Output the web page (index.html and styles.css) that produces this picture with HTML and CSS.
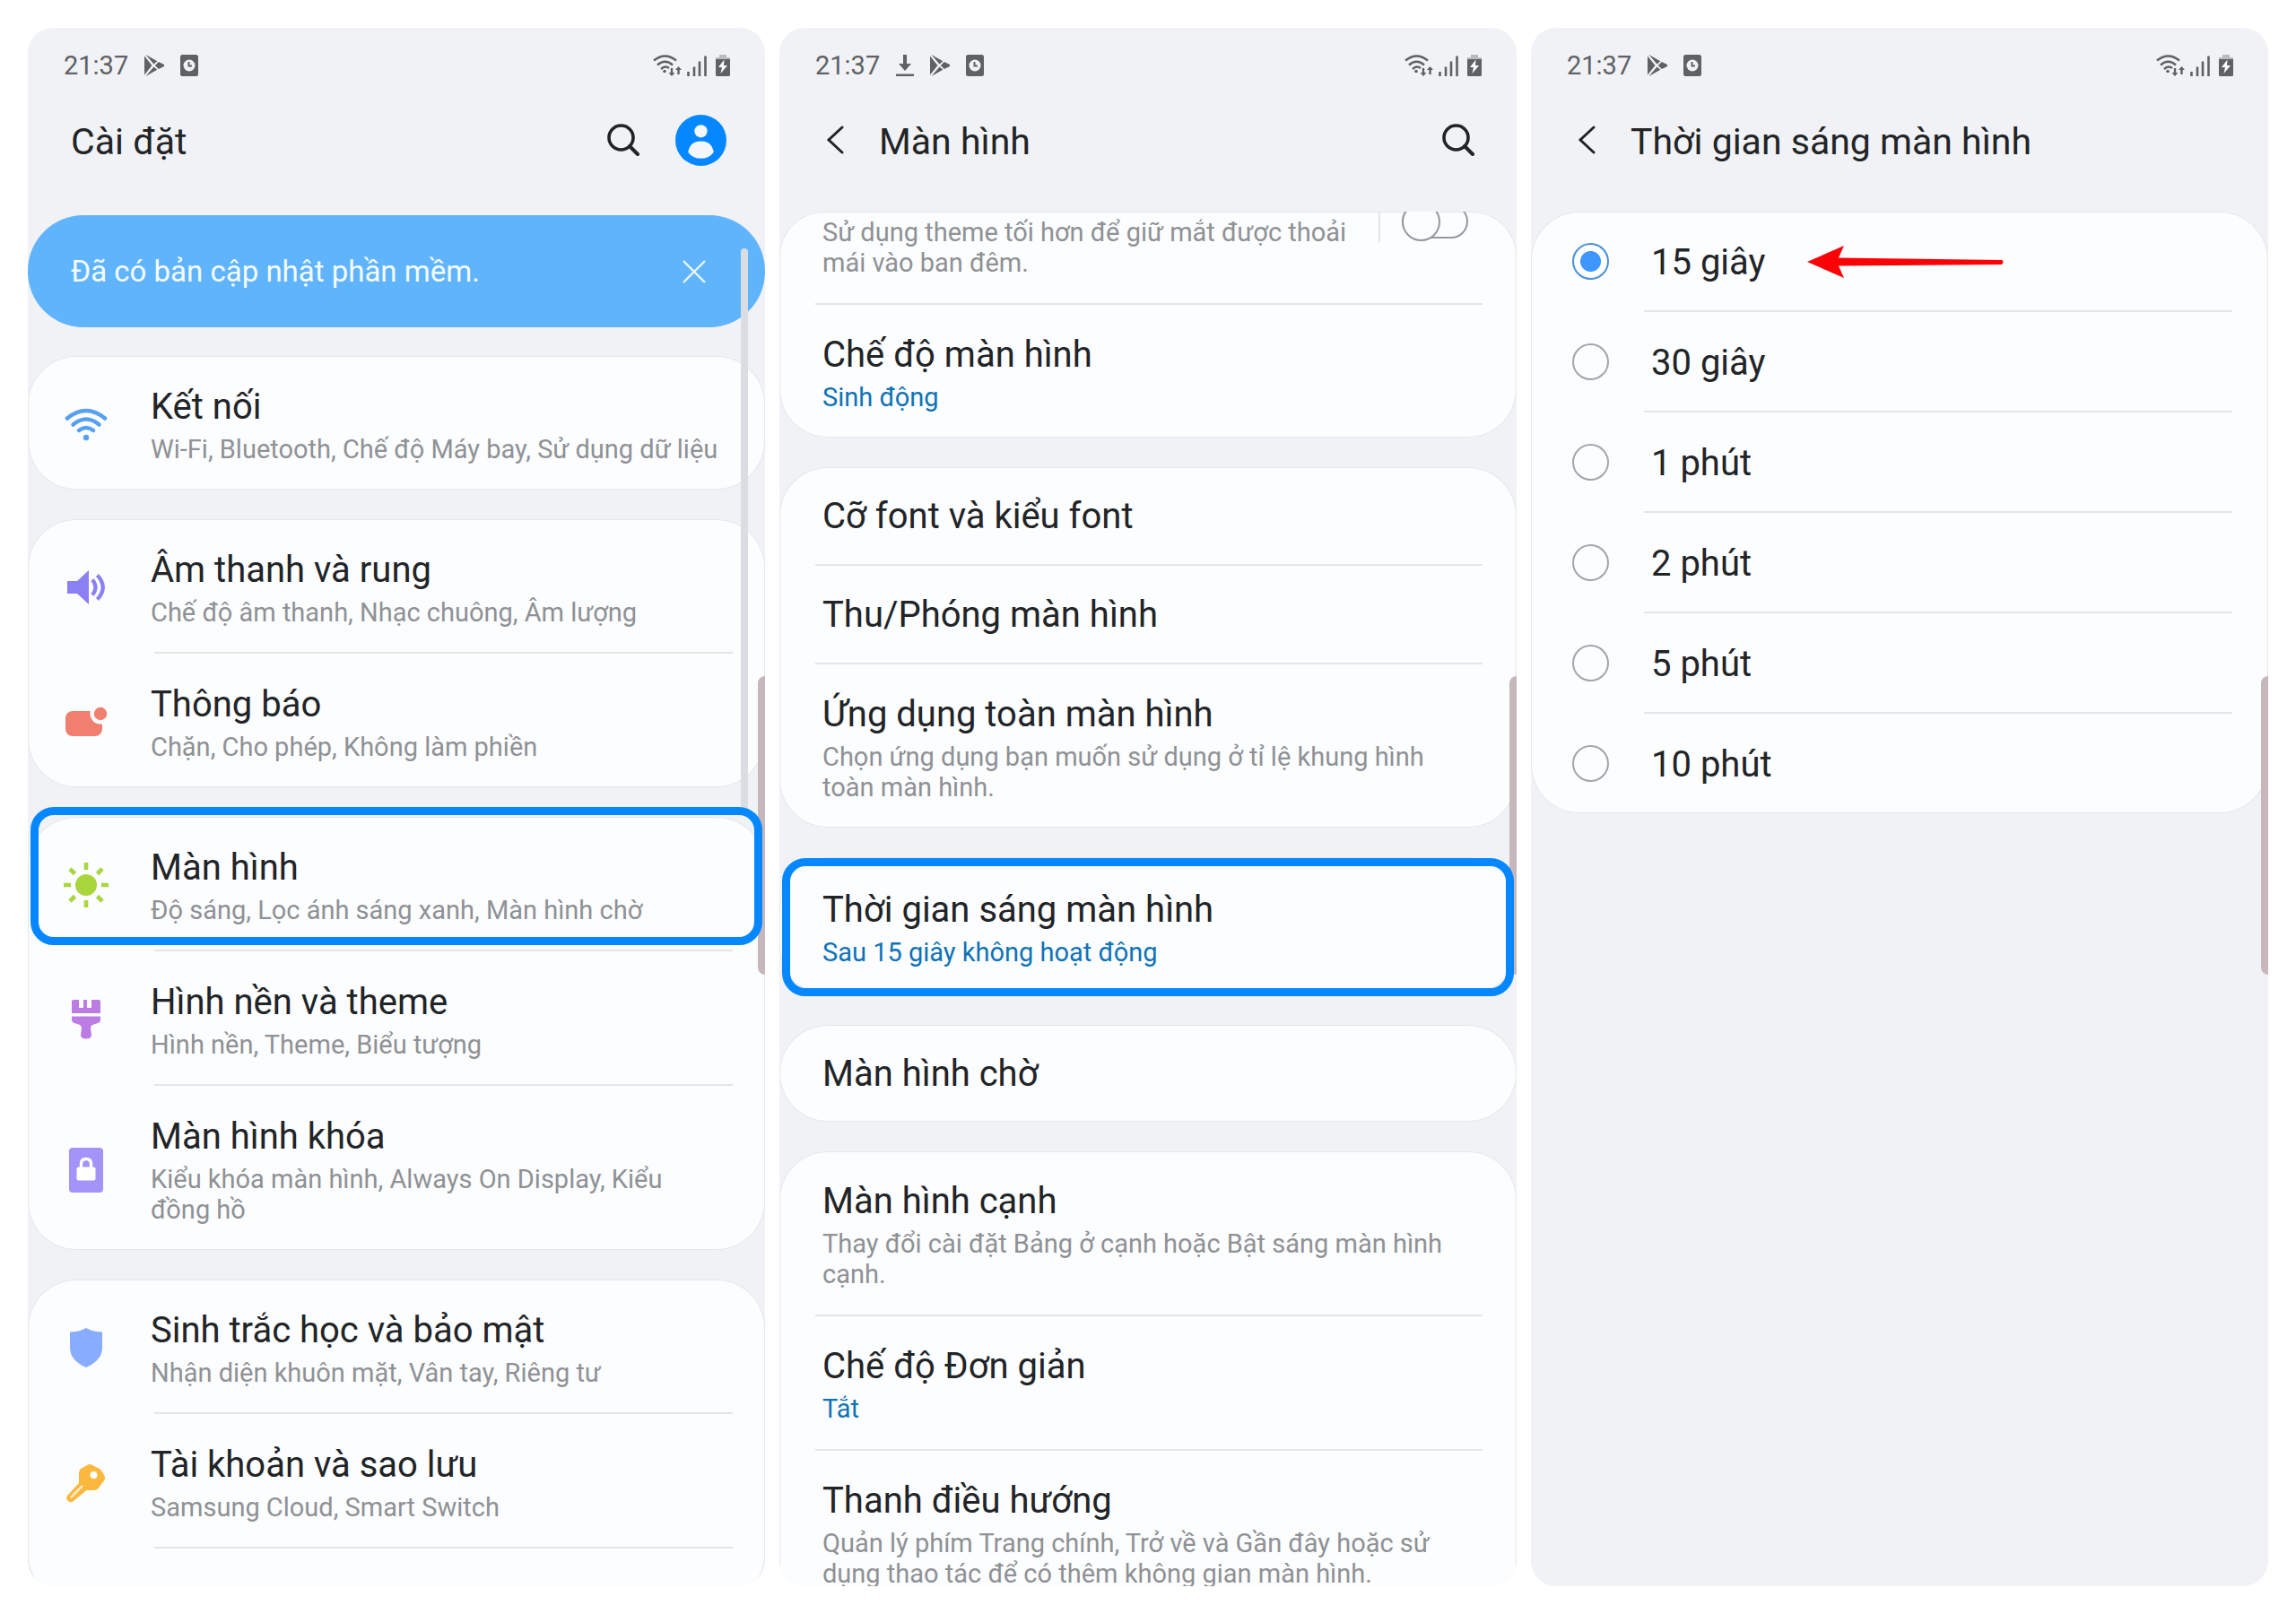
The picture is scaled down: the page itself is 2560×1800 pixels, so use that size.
FILE: index.html
```
<!DOCTYPE html>
<html lang="vi">
    <head>
        <meta charset="utf-8">
        <title>Cài đặt</title>
        <link rel="stylesheet" href="styles.css">
    </head>
    <body>
        <svg class="sprite" aria-hidden="true">
            <symbol id="i-play" viewBox="0 0 22 24">
                <path d="M0 1.500v21L8.500 12zM1.500 0l9 10.500 3.800-3.300zM1.500 24l9-10.500 3.800 3.300zM15.800 8l-4 4 4 4 6.200-3v-2z" fill="currentColor"/>
            </symbol>
            <symbol id="i-doc" viewBox="0 0 20 24">
                <rect width="20" height="24" rx="2.500" fill="currentColor"/>
                <circle cx="10" cy="12" r="6.500" fill="#f0f2f4"/>
                <path d="M9.500 8v4.500h3.500" fill="none" stroke="currentColor" stroke-width="2"/>
            </symbol>
            <symbol id="i-down" viewBox="0 0 20 24">
                <path d="M8 0h4v10h5L10 18 3 10h5zM0 21.500h20V24H0z" fill="currentColor"/>
            </symbol>
            <symbol id="i-netwifi" viewBox="0 0 32 24">
                <g fill="none" stroke="currentColor" stroke-width="2.500">
                    <path d="M1 6.500Q13.500-3.500 26 6.500"/>
                    <path d="M5 11.500Q13.500 4 22 11.500"/>
                    <path d="M9 16Q13.500 11.500 18 15"/>
                </g>
                <circle cx="13" cy="18.500" r="1.800" fill="currentColor"/>
                <path d="M19.800 15h2.400v5h2.300L21 24l-3.500-4h2.300zM27.300 22v-5H25l3.500-4 3.500 4h-2.300v5z" fill="currentColor"/>
            </symbol>
            <symbol id="i-signal" viewBox="0 0 22 24">
                <path d="M1.500 19v5M8 13.500V24M14 7.500V24M20.500 1.500V24" stroke="currentColor" stroke-width="2.600"/>
            </symbol>
            <symbol id="i-battery" viewBox="0 0 16 24">
                <path d="M4 0h8v3h4v4H0V3h4z" fill="#b9bbbe"/>
                <path d="M0 5h16v17.500q0 1.500-1.500 1.500h-13Q0 24 0 22.500z" fill="currentColor"/>
                <path d="M9.500 5.500L3 14h4l-1.500 7L13 12H9z" fill="#fff"/>
            </symbol>
            <symbol id="i-search" viewBox="0 0 36 36">
                <circle cx="15.500" cy="15.500" r="13.500" fill="none" stroke="currentColor" stroke-width="3.600"/>
                <path d="M25 25l9 9" stroke="currentColor" stroke-width="4" stroke-linecap="round"/>
            </symbol>
            <symbol id="i-back" viewBox="0 0 20 32">
                <path d="M18 2L3 16l15 14" fill="none" stroke="currentColor" stroke-width="3" stroke-linecap="round"/>
            </symbol>
        </svg>

        <main class="screens">
            <section class="phone">
                <div class="statusbar">
                    <span class="time">21:37</span>
                    <svg class="st play"><use href="#i-play"/></svg>
                    <svg class="st doc"><use href="#i-doc"/></svg>
                    <svg class="st netwifi"><use href="#i-netwifi"/></svg>
                    <svg class="st signal"><use href="#i-signal"/></svg>
                    <svg class="st battery"><use href="#i-battery"/></svg>
                </div>
                <header class="appbar">
                    <h1>Cài đặt</h1>
                    <button class="search" aria-label="Tìm kiếm"><svg><use href="#i-search"/></svg></button>
                    <button class="avatar" aria-label="Tài khoản">
                        <svg viewBox="0 0 56 56">
                            <circle cx="28" cy="28" r="28" fill="#0588ff"/>
                            <circle cx="28" cy="18" r="7" fill="#f4f8fc"/>
                            <path d="M14 41q2-12 14-12t14 12q-5 7-14 7t-14-7z" fill="#f4f8fc"/>
                        </svg>
                    </button>
                </header>
                <div class="content home">
                    <div class="banner">
                        <p>Đã có bản cập nhật phần mềm.</p>
                        <button class="close" aria-label="Đóng">
                            <svg viewBox="0 0 26 26"><path d="M1 1l24 24M25 1L1 25" stroke="#e9f6ff" stroke-width="2.400"/></svg>
                        </button>
                    </div>
                    <div class="card">
                        <a class="row" href="#">
                            <svg class="icon" viewBox="0 0 52 52">
                                <g fill="none" stroke="#579ff0" stroke-width="4.500" stroke-linecap="round">
                                    <path d="M5 18.500Q26 1.500 47 18.500"/>
                                    <path d="M11.500 25.500Q26 13.500 40.500 25.500"/>
                                    <path d="M18 32Q26 26 34 32"/>
                                </g>
                                <circle cx="26" cy="40" r="3.200" fill="#579ff0"/>
                            </svg>
                            <div class="text">
                                <h2>Kết nối</h2>
                                <p>Wi-Fi, Bluetooth, Chế độ Máy bay, Sử dụng dữ liệu</p>
                            </div>
                        </a>
                    </div>
                    <div class="card">
                        <a class="row" href="#">
                            <svg class="icon" viewBox="0 0 52 52">
                                <path d="M5 18h11L29 6v38L16 32H5z" fill="#8b80f3"/>
                                <path d="M33 16.500q7 8.500 0 17M38.500 11.500q12.500 13.500 0 27" fill="none" stroke="#8b80f3" stroke-width="4.200"/>
                            </svg>
                            <div class="text">
                                <h2>Âm thanh và rung</h2>
                                <p>Chế độ âm thanh, Nhạc chuông, Âm lượng</p>
                            </div>
                        </a>
                        <a class="row" href="#">
                            <svg class="icon" viewBox="0 0 52 52">
                                <rect x="3" y="13" width="41" height="28" rx="8" fill="#f07f70"/>
                                <circle cx="42" cy="16" r="11.500" fill="#fbfdff"/>
                                <circle cx="42" cy="16" r="7.200" fill="#f07f70"/>
                            </svg>
                            <div class="text">
                                <h2>Thông báo</h2>
                                <p>Chặn, Cho phép, Không làm phiền</p>
                            </div>
                        </a>
                    </div>
                    <div class="card">
                        <a class="row" href="#">
                            <svg class="icon" viewBox="0 0 52 52">
                                <circle cx="26" cy="25" r="12" fill="#a8d63c"/>
                                <path d="M26 0v8M26 42v8M1 25h8M43 25h8M8 7l5.500 5.500M38.500 37.500L44 43M44 7l-5.500 5.500M13.500 37.500L8 43" stroke="#a8d63c" stroke-width="4.600"/>
                            </svg>
                            <div class="text">
                                <h2>Màn hình</h2>
                                <p>Độ sáng, Lọc ánh sáng xanh, Màn hình chờ</p>
                            </div>
                            <span class="highlight first"></span>
                        </a>
                        <a class="row" href="#">
                            <svg class="icon" viewBox="0 0 52 52">
                                <path d="M12 3h6v9h5V3h4v9h5V3h8q2 0 2 2v13H10V5q0-2 2-2z" fill="#bc7ce4"/>
                                <path d="M10 21.500h32V25q0 3-3 4l-6 2q-2 1-2 4l1 7q0 4.500-6 4.500T20 42l1-7q0-3-2-4l-6-2q-3-1-3-4z" fill="#bc7ce4"/>
                            </svg>
                            <div class="text">
                                <h2>Hình nền và theme</h2>
                                <p>Hình nền, Theme, Biểu tượng</p>
                            </div>
                        </a>
                        <a class="row" href="#">
                            <svg class="icon" viewBox="0 0 52 52">
                                <rect x="7" y="1" width="38" height="50" rx="4" fill="#a493f8"/>
                                <rect x="15.500" y="22.500" width="21" height="15" rx="2" fill="#fff"/>
                                <path d="M20.500 23v-4q0-5.500 5.500-5.500t5.500 5.500v4" fill="none" stroke="#fff" stroke-width="3.400"/>
                            </svg>
                            <div class="text">
                                <h2>Màn hình khóa</h2>
                                <p>Kiểu khóa màn hình, Always On Display, Kiểu<br>đồng hồ</p>
                            </div>
                        </a>
                    </div>
                    <div class="card">
                        <a class="row" href="#">
                            <svg class="icon" viewBox="0 0 52 52">
                                <path d="M26 3q8 4.500 18 4.500V25q0 14-18 22Q8 39 8 25V7.500Q18 7.500 26 3z" fill="#88acff"/>
                            </svg>
                            <div class="text">
                                <h2>Sinh trắc học và bảo mật</h2>
                                <p>Nhận diện khuôn mặt, Vân tay, Riêng tư</p>
                            </div>
                        </a>
                        <a class="row" href="#">
                            <svg class="icon" viewBox="0 0 52 52">
                                <path d="M28 5.500q2-1 4 0l9 4.500q3 2 4 5l2 4q.5 3-1.500 5l-6 8q-2 2-5 2h-8L12 46q-3 2.500-6 0t-1-6l13-14v-11q0-3 2-5z" fill="#fbb83e"/>
                                <circle cx="34.500" cy="17" r="4" fill="#fbfdff"/>
                                <path d="M9 42l13-13" stroke="#fdf1d5" stroke-width="2.400"/>
                            </svg>
                            <div class="text">
                                <h2>Tài khoản và sao lưu</h2>
                                <p>Samsung Cloud, Smart Switch</p>
                            </div>
                        </a>
                        <a class="row" href="#" aria-label="Google"></a>
                    </div>
                    <span class="scrollbar"></span>
                </div>
                <span class="edge"></span>
            </section>

            <section class="phone">
                <div class="statusbar">
                    <span class="time">21:37</span>
                    <svg class="st down"><use href="#i-down"/></svg>
                    <svg class="st play"><use href="#i-play"/></svg>
                    <svg class="st doc"><use href="#i-doc"/></svg>
                    <svg class="st netwifi"><use href="#i-netwifi"/></svg>
                    <svg class="st signal"><use href="#i-signal"/></svg>
                    <svg class="st battery"><use href="#i-battery"/></svg>
                </div>
                <header class="appbar">
                    <button class="back" aria-label="Quay lại"><svg><use href="#i-back"/></svg></button>
                    <h1>Màn hình</h1>
                    <button class="search" aria-label="Tìm kiếm"><svg><use href="#i-search"/></svg></button>
                </header>
                <div class="content display">
                    <div class="card scrolled">
                        <div class="row">
                            <label class="text" for="night">
                                <p>Sử dụng theme tối hơn để giữ mắt được thoải<br>mái vào ban đêm.</p>
                            </label>
                            <span class="switch"><input id="night" type="checkbox"></span>
                        </div>
                        <a class="row" href="#">
                            <div class="text">
                                <h2>Chế độ màn hình</h2>
                                <p class="value">Sinh động</p>
                            </div>
                        </a>
                    </div>
                    <div class="card">
                        <a class="row single" href="#"><h2>Cỡ font và kiểu font</h2></a>
                        <a class="row single" href="#"><h2>Thu/Phóng màn hình</h2></a>
                        <a class="row" href="#">
                            <div class="text">
                                <h2>Ứng dụng toàn màn hình</h2>
                                <p>Chọn ứng dụng bạn muốn sử dụng ở tỉ lệ khung hình<br>toàn màn hình.</p>
                            </div>
                        </a>
                    </div>
                    <div class="card timeout">
                        <a class="row" href="#">
                            <div class="text">
                                <h2>Thời gian sáng màn hình</h2>
                                <p class="value">Sau 15 giây không hoạt động</p>
                            </div>
                        </a>
                        <span class="highlight"></span>
                    </div>
                    <div class="card">
                        <a class="row single" href="#"><h2>Màn hình chờ</h2></a>
                    </div>
                    <div class="card">
                        <a class="row" href="#">
                            <div class="text">
                                <h2>Màn hình cạnh</h2>
                                <p>Thay đổi cài đặt Bảng ở cạnh hoặc Bật sáng màn hình<br>cạnh.</p>
                            </div>
                        </a>
                        <a class="row" href="#">
                            <div class="text">
                                <h2>Chế độ Đơn giản</h2>
                                <p class="value">Tắt</p>
                            </div>
                        </a>
                        <a class="row" href="#">
                            <div class="text">
                                <h2>Thanh điều hướng</h2>
                                <p>Quản lý phím Trang chính, Trở về và Gần đây hoặc sử<br>dụng thao tác để có thêm không gian màn hình.</p>
                            </div>
                        </a>
                    </div>
                </div>
                <span class="edge"></span>
            </section>

            <section class="phone">
                <div class="statusbar">
                    <span class="time">21:37</span>
                    <svg class="st play"><use href="#i-play"/></svg>
                    <svg class="st doc"><use href="#i-doc"/></svg>
                    <svg class="st netwifi"><use href="#i-netwifi"/></svg>
                    <svg class="st signal"><use href="#i-signal"/></svg>
                    <svg class="st battery"><use href="#i-battery"/></svg>
                </div>
                <header class="appbar">
                    <button class="back" aria-label="Quay lại"><svg><use href="#i-back"/></svg></button>
                    <h1>Thời gian sáng màn hình</h1>
                </header>
                <div class="content options">
                    <div class="card">
                        <label class="option">
                            <input type="radio" name="timeout" checked><span>15 giây</span>
                            <svg class="arrow" viewBox="0 0 220 36">
                                <path d="M0 18L41 0l-6 13.500L217 16q3 2 0 5L35 22.500l6 13.500z" fill="#fb0207"/>
                            </svg>
                        </label>
                        <label class="option"><input type="radio" name="timeout"><span>30 giây</span></label>
                        <label class="option"><input type="radio" name="timeout"><span>1 phút</span></label>
                        <label class="option"><input type="radio" name="timeout"><span>2 phút</span></label>
                        <label class="option"><input type="radio" name="timeout"><span>5 phút</span></label>
                        <label class="option"><input type="radio" name="timeout"><span>10 phút</span></label>
                    </div>
                </div>
                <span class="edge"></span>
            </section>
        </main>
    </body>
</html>
```
FILE: styles.css
```
* {
    box-sizing: border-box;
}
body {
    margin: 0;
    background: white;
    color: #222426;
    font-family: Roboto, "Noto Sans", sans-serif;
}
h1,
h2,
p {
    margin: 0;
    font-weight: 400;
}
a {
    color: inherit;
    text-decoration: none;
}
button {
    display: flex;
    padding: 0;
    border: none;
    background: none;
    color: inherit;
    cursor: pointer;
}
.sprite {
    display: none;
}
.screens {
    display: grid;
    grid-template-columns: repeat(3, 1fr);
    gap: 16px;
    height: 100vh;
    padding: 31px;
}
.phone {
    position: relative;
    display: flex;
    flex-direction: column;
    min-width: 0;
    min-height: 0;
    overflow: hidden;
    border-radius: 28px;
    background: #f0f2f5;
}

/* status bar */
.statusbar {
    display: flex;
    flex: none;
    align-items: center;
    gap: 18px;
    height: 82px;
    padding: 2px 39px 0 40px;
    color: #5f6164;
}
.time {
    font-size: 29px;
}
.st {
    width: 20px;
    height: 24px;
}
.play {
    width: 22px;
}
.netwifi {
    width: 32px;
    margin-left: auto;
}
.signal {
    width: 22px;
    margin-left: -12px;
}
.battery {
    width: 16px;
    margin-left: -8px;
}

/* title bar */
.appbar {
    display: flex;
    flex: none;
    align-items: center;
    height: 86px;
    margin-bottom: 37px;
    padding: 0 43px 0 48px;
}
.appbar h1 {
    flex: 1;
    padding-top: 4px;
    font-size: 41px;
    line-height: 50px;
}
.search svg {
    width: 36px;
    height: 36px;
}
.search:last-child {
    margin-right: 4px;
}
.avatar {
    margin-left: 40px;
}
.avatar svg {
    width: 57px;
    height: 57px;
}
.back {
    margin-right: 39px;
    padding-left: 4px;
}
.back svg {
    width: 20px;
    height: 32px;
}

.content {
    position: relative;
    flex: 1;
    min-height: 0;
    overflow: hidden;
}
.home {
    padding-top: 4px;
}
.banner {
    display: flex;
    align-items: center;
    justify-content: space-between;
    height: 125px;
    margin-bottom: 32px;
    padding: 0 66px 0 48px;
    border-radius: 62px;
    background: #60b4fc;
    color: #f4fbff;
    font-size: 33px;
}
.close svg {
    width: 26px;
    height: 26px;
}

/* cards */
.card {
    position: relative;
    margin-bottom: 33px;
    border-radius: 54px;
    background: #fbfdff;
    box-shadow: inset 0 0 0 1px #e4e7ea;
}
.row {
    position: relative;
    display: flex;
    align-items: center;
    padding: 32px 36px 28px 48px;
}
.row + .row {
    margin-top: 2px;
}
.row + .row::before,
.option + .option::before {
    content: "";
    position: absolute;
    top: -2px;
    left: 40px;
    right: 38px;
    height: 2px;
    background: #e3e6e9;
}
.home .row {
    gap: 46px;
    padding-top: 33px;
    padding-left: 39px;
}
.home .row + .row {
    margin-top: 1px;
}
.home .row + .row::before {
    left: 141px;
    right: 36px;
}
.single {
    padding-top: 31px;
    padding-bottom: 29px;
}
.icon {
    flex: none;
    width: 52px;
    height: 52px;
}
.text {
    flex: 1;
}
.row h2 {
    font-size: 40px;
    line-height: 48px;
}
.row p {
    color: #8f9194;
    font-size: 29px;
    line-height: 34px;
}
.row h2 + p {
    margin-top: 6px;
}
.row .value {
    color: #0f72b5;
}
.scrolled {
    overflow: hidden;
    border-top-left-radius: 50px;
    border-top-right-radius: 50px;
}
.scrolled .row:first-child {
    align-items: flex-start;
    padding-top: 6px;
}
.timeout {
    padding: 3px 0;
}
.highlight {
    position: absolute;
    z-index: 2;
    top: 1px;
    bottom: -1px;
    left: 3px;
    right: 3px;
    border: 9px solid #0588ff;
    border-radius: 26px;
}
.highlight.first {
    top: -11px;
    bottom: 6px;
}

/* on/off switch */
.switch {
    height: 46px;
    margin-top: -18px;
    padding: 0 18px 0 24px;
    border-left: 2px solid #e3e6e9;
}
.switch input {
    position: relative;
    appearance: none;
    width: 74px;
    height: 38px;
    margin: 4px 0 0;
    border: 2px solid #96989b;
    border-radius: 19px;
}
.switch input::before {
    content: "";
    position: absolute;
    top: -4px;
    left: -2px;
    box-sizing: border-box;
    width: 43px;
    height: 43px;
    border: 2px solid #96989b;
    border-radius: 50%;
    background: #fbfdff;
}

/* radio list */
.option {
    position: relative;
    display: flex;
    align-items: center;
    height: 111px;
    padding-left: 46px;
    font-size: 40px;
}
.option + .option {
    margin-top: 1px;
}
.option + .option::before {
    left: 126px;
    right: 40px;
}
.option span {
    padding-top: 2px;
}
.option input {
    flex: none;
    appearance: none;
    width: 41px;
    height: 41px;
    margin: 0 47px 0 0;
    border: 2px solid #a3a5a8;
    border-radius: 50%;
}
.option input:checked {
    border-color: #4a90d9;
    background: radial-gradient(circle, #3e97ff 11px, transparent 12px);
}
.arrow {
    width: 220px;
    height: 36px;
    margin-left: 47px;
}

.scrollbar {
    position: absolute;
    top: 41px;
    right: 19px;
    width: 8px;
    height: 628px;
    border-radius: 4px;
    background: #dadde1;
}
.edge {
    position: absolute;
    top: 723px;
    right: 0;
    width: 8px;
    height: 333px;
    border-radius: 8px 0 0 8px;
    background: #c8b7ba;
}
```
